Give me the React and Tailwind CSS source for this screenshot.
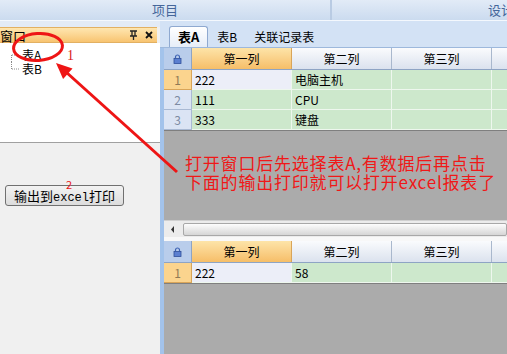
import React from "react";

const cols = ["第一列", "第二列", "第三列", ""];

function Lock() {
  return (
    <svg width="9" height="10" viewBox="0 0 9 10">
      <path d="M2.5 4.5V3a2 2 0 0 1 4 0v1.5" fill="none" stroke="#3d62b3" strokeWidth="1.2" />
      <rect x="1" y="4.5" width="7" height="5" fill="#5b7fd0" stroke="#2f4f9a" strokeWidth="0.8" />
    </svg>
  );
}

function Grid({ rows }) {
  return (
    <div className="flex flex-col w-[600px]">
      <div className="flex h-[22px] border-b border-[#8ea4c4]">
        <div className="w-[28px] shrink-0 flex items-center justify-center bg-[#b9cdeb] border-r border-[#8ea4c4]">
          <Lock />
        </div>
        {cols.map((c, i) => (
          <div
            key={i}
            className={`w-[100px] shrink-0 flex items-center justify-center border-r text-black ${
              i === 0
                ? "bg-linear-to-b from-[#fde4a8] to-[#f6be68] border-[#d9a559]"
                : "bg-linear-to-b from-[#fafbfd] to-[#dbe2ee] border-[#a9b8cd]"
            }`}
          >
            {c}
          </div>
        ))}
      </div>
      {rows.map((r, ri) => (
        <div key={ri} className="flex h-[20px]">
          <div
            className={`w-[28px] shrink-0 flex items-center justify-center border-r border-b ${
              ri === 0
                ? "bg-[#fbd48e] border-[#d9a559] text-[#8f7a55]"
                : "bg-[#dbe4f4] border-[#a9b9d3] text-[#7d8ba3]"
            }`}
          >
            {ri + 1}
          </div>
          {r.map((v, ci) => (
            <div
              key={ci}
              className={`w-[100px] shrink-0 flex items-center pl-[3px] border-r border-b border-[#eef7ee] text-black ${
                ri === 0 && ci === 0 ? "bg-[#eceef8]" : "bg-[#cde8cc]"
              }`}
            >
              {v}
            </div>
          ))}
        </div>
      ))}
      <div className="h-px bg-[#7f7f7f]" />
    </div>
  );
}

export default function App() {
  return (
    <div className="relative w-[507px] h-[354px] overflow-hidden bg-[#f0f0f0] text-[12px] font-['Noto_Sans_CJK_SC',sans-serif]">
      {/* top bar */}
      <div className="flex h-[21px] bg-linear-to-b from-[#e2ebf7] to-[#cbdbef] border-b border-[#f4f8fd] text-[13px] text-[#45669a]">
        <div className="w-[332px] shrink-0 flex items-center justify-center border-r-2 border-[#b9cbe3]">项目</div>
        <div className="w-[338px] shrink-0 flex items-center justify-center">设计</div>
      </div>

      <div className="flex h-[333px]">
        {/* left panel */}
        <div className="w-[160px] shrink-0 flex flex-col">
          <div className="h-[6px] bg-[#e3ebf6]" />
          <div className="h-[16px] flex items-center bg-linear-to-b from-[#fee6b0] to-[#f8c470] border-y border-[#e2b062] mr-[3px] text-[13px] text-black">
            <span className="flex-1 leading-none">窗口</span>
            <svg width="9" height="10" viewBox="0 0 9 10" className="mr-[7px]">
              <path d="M1 1h7M3 1v5M6 1v5M1 6h7M4.5 6v4" stroke="#222" strokeWidth="1.3" fill="none" />
            </svg>
            <svg width="8" height="8" viewBox="0 0 8 8" className="mr-[4px]">
              <path d="M1 1l6 6M7 1l-6 6" stroke="#111" strokeWidth="1.8" />
            </svg>
          </div>
          <div className="h-[100px] bg-white pt-[5px] text-[12px] leading-[14px] text-black border-b border-[#a0a0a0]">
            <div className="flex h-[14px] items-center">
              <svg width="22" height="14" className="shrink-0">
                <path d="M11.5 7v7M12 7h8" stroke="#8a8a8a" strokeDasharray="1 1" />
              </svg>
              <span>表A</span>
            </div>
            <div className="flex h-[14px] items-center">
              <svg width="22" height="14" className="shrink-0">
                <path d="M11.5 0v7M12 7h8" stroke="#8a8a8a" strokeDasharray="1 1" />
              </svg>
              <span>表B</span>
            </div>
          </div>
          <div className="flex-1 pt-[42px] pl-[5px]">
            <button className="relative w-[119px] h-[21px] rounded-[3px] border border-[#707070] bg-linear-to-b from-[#f3f3f3] to-[#dcdcdc] text-[13px] leading-[19px] text-black text-center">
              <span>
                输出到<span className="font-['Liberation_Mono',monospace] text-[12px]">excel</span>打印
              </span>
              <span className="absolute left-[60px] top-[-7px] text-[11px] leading-none text-[#e81818]">2</span>
            </button>
          </div>
        </div>

        {/* right panel */}
        <div className="flex-1 min-w-0 flex flex-col bg-[#d3e2f5]">
          <div className="h-[27px] flex items-end gap-[8px] pl-[9px] border-b border-[#9db8dc] text-black">
            <div className="h-[21px] px-[8px] flex items-center rounded-t-[3px] border border-b-0 border-[#8fa9d0] bg-linear-to-b from-[#ffffff] to-[#e6edf8] font-bold text-[13px]">
              表A
            </div>
            <div className="h-[21px] px-[1px] flex items-center">表B</div>
            <div className="h-[21px] px-[8px] flex items-center">关联记录表</div>
          </div>
          <div className="flex-1 flex">
            <div className="w-[4px] shrink-0 bg-[#a3c3eb]" />
            <div className="flex-1 min-w-0 flex flex-col overflow-hidden bg-[#ababab]">
              <Grid
                rows={[
                  ["222", "电脑主机", "", ""],
                  ["111", "CPU", "", ""],
                  ["333", "键盘", "", ""],
                ]}
              />
              <div className="h-[89px] pl-[21px] pt-[22px] text-[17px] leading-[19px] tracking-[0.8px] text-[#f01818] whitespace-nowrap">
                <div>打开窗口后先选择表A,有数据后再点击</div>
                <div>下面的输出打印就可以打开excel报表了</div>
              </div>
              <div className="h-[17px] flex items-center bg-[#ececec] border-t border-[#d0d0d0]">
                <svg width="19" height="17" viewBox="0 0 19 17" className="shrink-0">
                  <path d="M10 5l-3 3.5 3 3.5z" fill="#333" />
                </svg>
                <div className="flex-1 h-[13px] rounded-[2px] border border-[#a8a8a8] bg-linear-to-b from-[#fdfdfd] to-[#d6d6d6]" />
              </div>
              <div className="h-[4px] bg-[#f8f8f8]" />
              <Grid rows={[["222", "58", "", ""]]} />
            </div>
          </div>
        </div>
      </div>

      {/* annotations */}
      <svg className="absolute inset-0 pointer-events-none" width="507" height="354" viewBox="0 0 507 354">
        <ellipse cx="38" cy="47" rx="24.5" ry="13.5" fill="none" stroke="#ee1515" strokeWidth="3" transform="rotate(-4 38 47)" />
        <line x1="177" y1="172" x2="66" y2="72" stroke="#ee1515" strokeWidth="3" />
        <polygon points="56,63 72.5,68.6 63.1,79" fill="#ee1515" />
      </svg>
      <span className="absolute left-[67px] top-[49px] text-[14px] leading-none text-[#d82020] font-['Liberation_Serif',serif]">1</span>
    </div>
  );
}
